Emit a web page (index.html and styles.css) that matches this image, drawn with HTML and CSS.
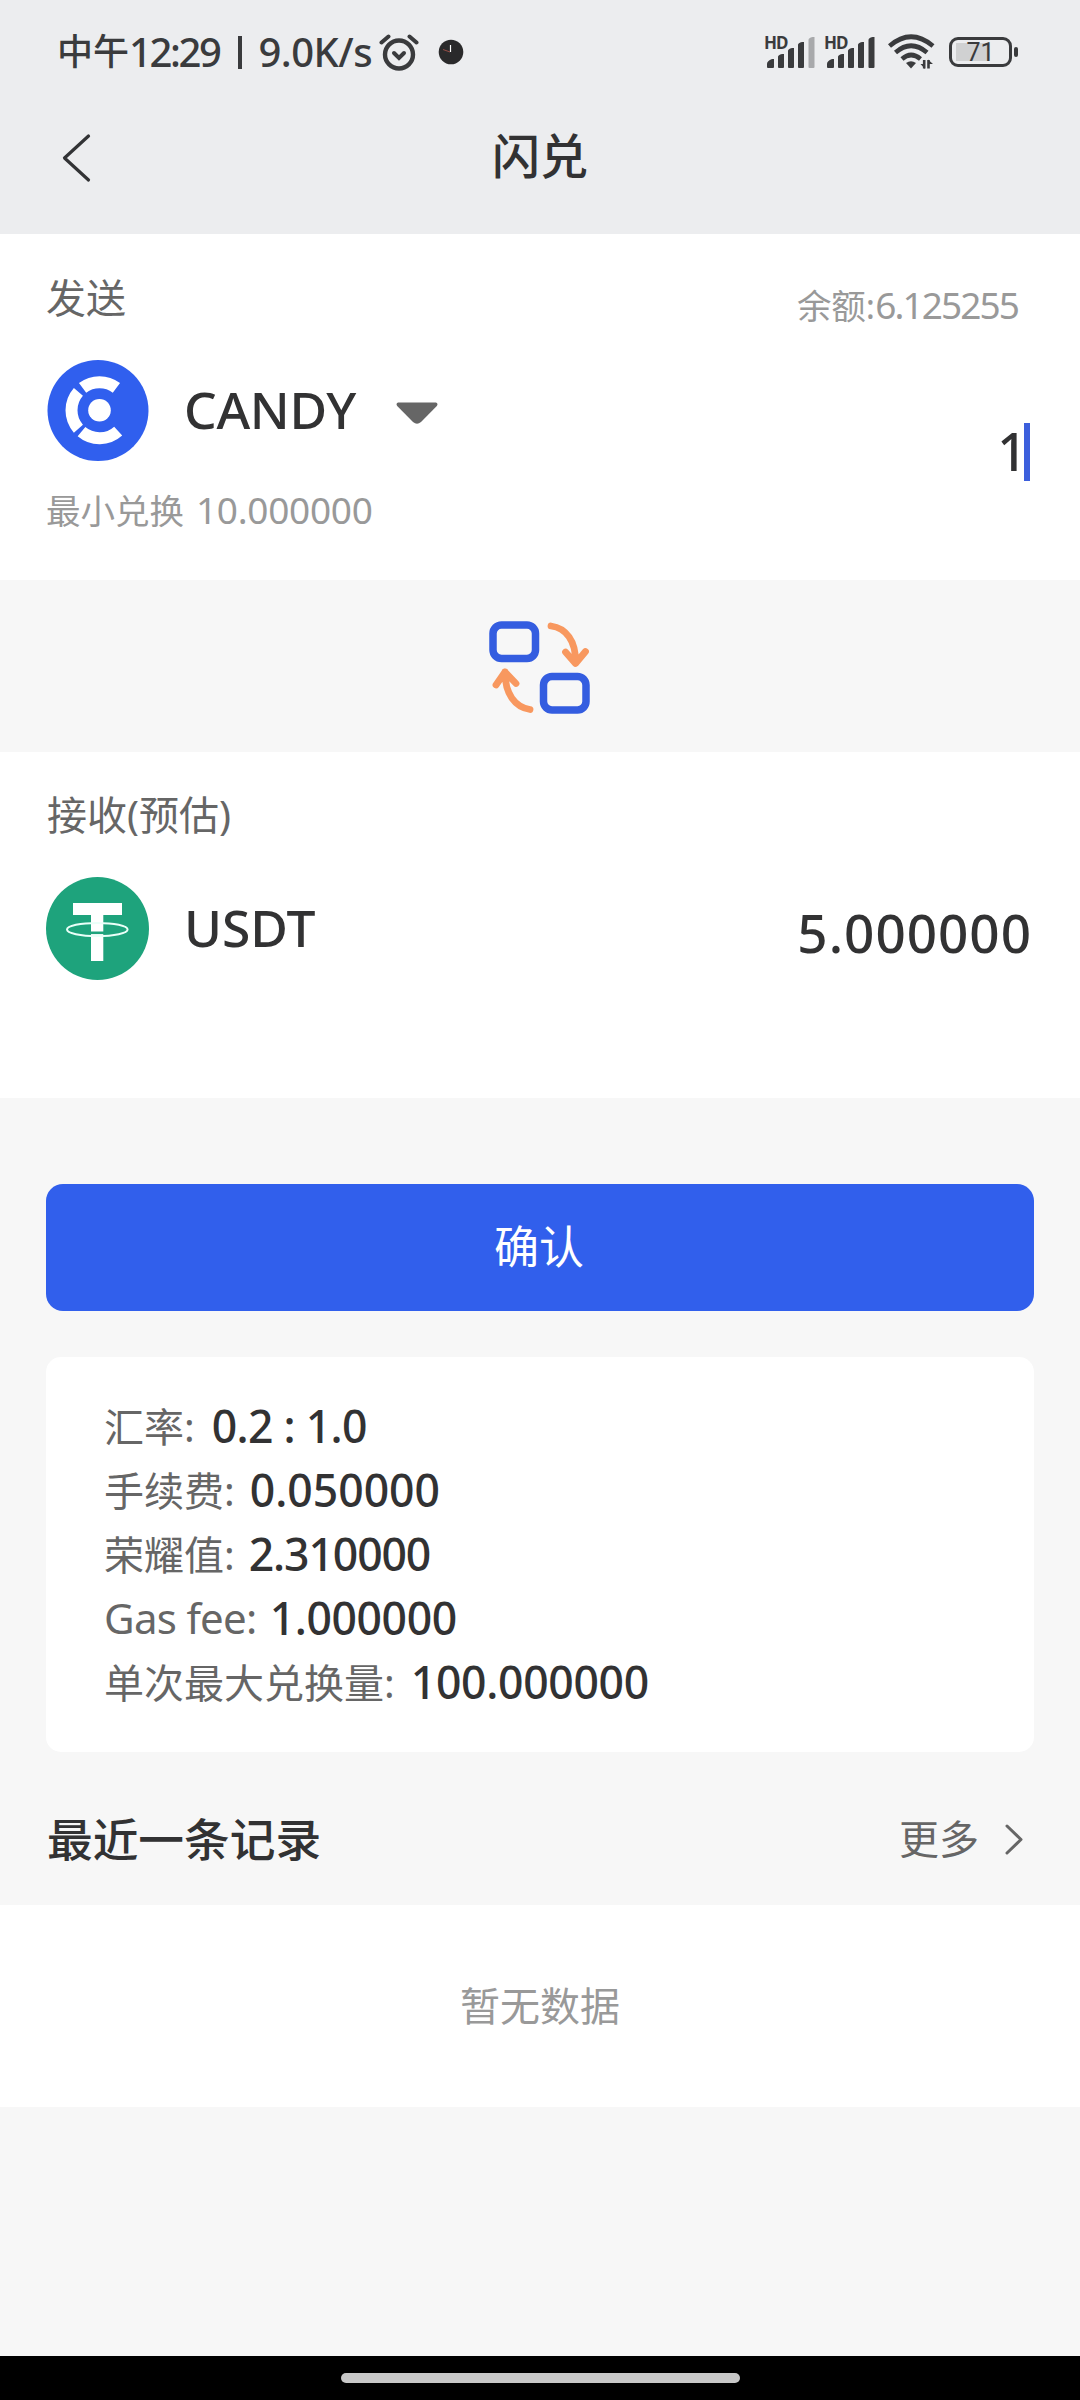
FILE: index.html
```html
<!DOCTYPE html>
<html lang="zh-CN">
<head>
<meta charset="utf-8">
<title>闪兑</title>
<link rel="stylesheet" href="styles.css">
</head>
<body>
<div class="screen">
  <header class="top">
    <div class="status">
      <div class="status-left">
        <span class="status-cn">中午</span><span class="status-time">12:29</span>
        <i class="status-bar"></i>
        <span class="status-speed">9.0K/s</span>
        <svg class="alarm" width="40" height="38" viewBox="0 0 40 38" fill="none" stroke="#3a3b3d" stroke-linecap="round">
          <circle cx="20" cy="21.5" r="14" stroke-width="4.4"/>
          <path d="M15 20l5 5 5-5" stroke-width="4"/>
          <path d="M2.500 9.500L9.500 3.500M37.500 9.500L30.500 3.500" stroke-width="4"/>
        </svg>
        <svg class="dial" width="26" height="26" viewBox="0 0 26 26">
          <circle cx="13" cy="13" r="12.300" fill="#2a2a2b"/>
          <path d="M12.500 13V6" stroke="#fff" stroke-width="1.200"/>
          <path d="M12 13L5 10.500" stroke="#b0554c" stroke-width=".8"/>
        </svg>
      </div>
      <div class="status-right">
        <div class="signal">
          <span class="hd">HD</span>
          <svg width="50" height="34" viewBox="0 0 50 34" fill="#3a3b3d">
            <path d="M2 32v-3q0-3 5-5h2v8q0 1-1 1H3q-1 0-1-1zM13 32V22q0-2 4-3h2v13q0 1-1 1h-4q-1 0-1-1zM23 32V16q0-2 4-3h2v19q0 1-1 1h-4q-1 0-1-1zM33 32V10q0-2 4-3h2v25q0 1-1 1h-4q-1 0-1-1z"/>
            <path d="M43.500 32V5q0-2 4-3h2v30q0 1-1 1h-4q-1 0-1-1z" fill="#a8a9ab"/>
          </svg>
        </div>
        <div class="signal">
          <span class="hd">HD</span>
          <svg width="50" height="34" viewBox="0 0 50 34" fill="#3a3b3d">
            <path d="M2 32v-3q0-3 5-5h2v8q0 1-1 1H3q-1 0-1-1zM13 32V22q0-2 4-3h2v13q0 1-1 1h-4q-1 0-1-1zM23 32V16q0-2 4-3h2v19q0 1-1 1h-4q-1 0-1-1zM33 32V10q0-2 4-3h2v25q0 1-1 1h-4q-1 0-1-1zM43.500 32V5q0-2 4-3h2v30q0 1-1 1h-4q-1 0-1-1z"/>
          </svg>
        </div>
        <svg class="wifi" width="47" height="36" viewBox="0 0 47 36" fill="none" stroke="#3a3b3d" stroke-width="4.600">
          <path d="M1.500 12Q23 -6.500 45 12"/>
          <path d="M7.500 18.500Q23 5 39 18.500"/>
          <path d="M14 25Q23 17 32.500 25"/>
          <path d="M18 29Q23 25.500 28 29L23 34.500z" fill="#3a3b3d" stroke="none"/>
          <path d="M36.200 34.500V26M40.500 26v8.500" stroke-width="2.600"/>
          <path d="M37 35l-4.500-5H37zM40 25.500l5 4.500h-5z" fill="#3a3b3d" stroke="none"/>
        </svg>
        <div class="battery"><span>71</span></div>
      </div>
    </div>
    <nav class="nav">
      <svg class="back" width="30" height="50" viewBox="0 0 30 50" fill="none" stroke="#323335" stroke-width="3.200" stroke-linecap="round" stroke-linejoin="round"><path d="M26.500 3L2.500 25 26.500 47"/></svg>
      <h1>闪兑</h1>
    </nav>
  </header>

  <main>
    <section class="card send">
      <div class="send-left">
        <div class="label">发送</div>
        <div class="token">
          <svg width="103" height="102" viewBox="-1 0 103 102">
            <circle cx="51" cy="50.500" r="50.500" fill="#305fee"/>
            <g transform="translate(52.500 50.300)" fill="none" stroke="#fff" stroke-width="12">
              <circle r="11.300" fill="#fff" stroke="none"/>
              <path d="M-16.900 -22.400A28 28 0 0 1 16.900 -22.400"/>
              <path d="M-21.100 -18.400A28 28 0 0 0 -21.100 18.400"/>
              <path d="M-18 21.400A28 28 0 0 0 18.700 20.800"/>
            </g>
          </svg>
          <span class="token-name candy">CANDY</span>
          <svg class="caret" width="42" height="22" viewBox="0 0 42 22"><path d="M2 .5h38q2.500 1 .8 3.500L25 20q-4 3.500-8 0L1.200 4Q-.5 1.500 2 .5z" fill="#666"/></svg>
        </div>
        <div class="min">最小兑换 <span class="min-num">10.000000</span></div>
      </div>
      <div class="send-right">
        <div class="balance">余额:<span class="balance-num">6.125255</span></div>
        <div class="amount-input"><span>1</span><i class="cursor"></i></div>
      </div>
    </section>

    <div class="swap">
      <svg width="102" height="94" viewBox="0 0 102 94" fill="none">
        <g stroke="#345de0" stroke-width="7.500">
          <rect x="4" y="4" width="42.500" height="33.500" rx="8.500"/>
          <rect x="54.500" y="55.500" width="42.500" height="33.500" rx="8.500"/>
        </g>
        <g stroke="#f8985f" stroke-width="6.800" stroke-linecap="round" stroke-linejoin="round">
          <path d="M62 5C77 7 87 20 86.500 41M76.500 31l10 11.500 10-12"/>
          <path d="M41 88.500C26 86 16 73 16 51M7 64l9-13 11 11.500"/>
        </g>
      </svg>
    </div>

    <section class="card receive">
      <div class="label">接收(预估)</div>
      <div class="token">
        <svg width="103" height="103" viewBox="0 0 103 103">
          <circle cx="51.500" cy="51.500" r="51.500" fill="#1ea37c"/>
          <path d="M27 26h49v12H57.300v46H45V38H27z" fill="#fff"/>
          <path d="M44 55.800h14.500" stroke="#1ea37c" stroke-width="2.600"/>
          <ellipse cx="51.300" cy="52.500" rx="30.300" ry="6.600" fill="none" stroke="#eafff8" stroke-width="2"/>
        </svg>
        <span class="token-name usdt">USDT</span>
        <span class="receive-amount">5.000000</span>
      </div>
    </section>

    <button class="confirm" type="button">确认</button>

    <section class="info">
      <div class="row"><span>汇率:</span><b class="rate">0.2 : 1.0</b></div>
      <div class="row"><span>手续费:</span><b>0.050000</b></div>
      <div class="row"><span>荣耀值:</span><b class="tight">2.310000</b></div>
      <div class="row"><span class="gas">Gas fee:</span><b class="gas-num">1.000000</b></div>
      <div class="row"><span>单次最大兑换量:</span><b class="max-num">100.000000</b></div>
    </section>

    <div class="records-head">
      <h2>最近一条记录</h2>
      <a class="more">更多
        <svg width="20" height="34" viewBox="0 0 20 34" fill="none" stroke="#666" stroke-width="3" stroke-linecap="round" stroke-linejoin="round"><path d="M3 4l14 13.500L3 31"/></svg>
      </a>
    </div>
    <div class="empty">暂无数据</div>
  </main>

  <footer class="gesture"><i></i></footer>
</div>
</body>
</html>
```
FILE: styles.css
```css
* { box-sizing: border-box; }

body {
  margin: 0;
  background: #f7f7f7;
  color: #323233;
  font-family: "Noto Sans", "Noto Sans CJK SC", sans-serif;
}

h1, h2 { margin: 0; }
svg { display: block; flex: none; }

.screen {
  width: 1080px;
  height: 2400px;
  display: flex;
  flex-direction: column;
}

main { flex: 1; }

/* status bar and title */
.top {
  height: 234px;
  background: #ecedef;
}

.status {
  height: 104px;
  display: flex;
  justify-content: space-between;
  align-items: center;
  padding: 0 62px 0 57px;
  line-height: 50px;
  color: #3a3b3d;
}

.status-left, .status-right { display: flex; align-items: center; }
.status-cn { font-size: 36px; font-weight: 500; }
.status-time { font-size: 40px; font-weight: 500; letter-spacing: -2.4px; }
.status-bar { width: 4px; height: 33px; margin: 0 16px 0 19px; background: #3a3b3d; }
.status-speed { font-size: 40px; font-weight: 500; letter-spacing: -.5px; }
.alarm { margin-left: 7px; }
.dial { margin-left: 19px; }

.signal { position: relative; width: 51px; margin-right: 9px; }
.hd {
  position: absolute;
  left: -1px;
  top: 0;
  font-size: 17px;
  font-weight: 700;
  line-height: 16px;
  letter-spacing: -1px;
}
.wifi { margin: 0 14px 0 3px; }

.battery {
  position: relative;
  width: 63px;
  height: 30px;
  border: 3px solid #3a3b3d;
  border-radius: 9px;
  background: linear-gradient(#d0d1d2, #d0d1d2) 4px 3px / 34px 18px no-repeat;
  font-family: Roboto, sans-serif;
  font-size: 25px;
  font-weight: 400;
  line-height: 25px;
  text-align: center;
  margin-right: 6px;
}
.battery::after {
  content: "";
  position: absolute;
  right: -9px;
  top: 7px;
  width: 4px;
  height: 10px;
  border-radius: 2px;
  background: #3a3b3d;
}

.nav {
  height: 104px;
  display: grid;
  grid-template-columns: 1fr auto 1fr;
  align-items: center;
  padding: 0 62px;
}
.nav h1 { font-size: 48px; font-weight: 500; line-height: 60px; }
.back { margin-top: 4px; }

/* token cards */
.card { height: 346px; background: #fff; padding: 43px 50px 0 46px; }
.label { font-size: 40px; line-height: 40px; color: #666; }
.token { display: flex; align-items: center; }
.token-name { margin-left: 35px; padding-bottom: 4px; font-size: 51.500px; font-weight: 500; line-height: 60px; }
.candy { letter-spacing: -.3px; }
.caret { margin-left: 40px; margin-top: 4px; }

.send { display: flex; justify-content: space-between; }
.send .label { margin-top: 1px; }
.send .token { margin-top: 42px; height: 101px; }
.min { margin-top: 29px; font-size: 34.500px; line-height: 40px; color: #999; }
.min-num { font-size: 37px; letter-spacing: -.3px; margin-left: 3px; }

.send-right { padding-top: 8px; display: flex; flex-direction: column; align-items: flex-end; }
.balance { margin-right: 12px; font-size: 34.500px; line-height: 40px; color: #999; }
.balance-num { font-size: 37px; letter-spacing: -1.900px; }
.amount-input {
  margin-top: 97px;
  height: 58px;
  display: flex;
  align-items: center;
  font-size: 52px;
  font-weight: 500;
  line-height: 58px;
}
.amount-input span { margin-right: -3px; padding-bottom: 2px; }
.cursor { width: 6px; height: 58px; background: #3c5fdc; }

.swap {
  height: 172px;
  padding-top: 3px;
  display: flex;
  align-items: center;
  justify-content: center;
}

.receive .label { padding-left: 1px; }
.receive .token { margin-top: 42px; }
.receive-amount {
  margin-left: auto;
  margin-right: -2px;
  padding-top: 8px;
  font-size: 53px;
  font-weight: 500;
  line-height: 60px;
  letter-spacing: 1px;
}

/* confirm button */
.confirm {
  display: block;
  width: 988px;
  height: 127px;
  margin: 86px auto 0;
  padding: 0 2px 2px 0;
  border: 0;
  border-radius: 17px;
  background: #315fec;
  color: #fff;
  font: 400 45px/60px "Noto Sans", "Noto Sans CJK SC", sans-serif;
}

/* exchange details */
.info {
  width: 988px;
  height: 395px;
  margin: 46px auto 0;
  padding: 38px 58px 0;
  border-radius: 15px;
  background: #fff;
}
.row { display: flex; align-items: center; height: 64px; font-size: 40px; line-height: 64px; color: #666; }
.row b { margin-left: 15px; padding-bottom: 3px; font-size: 44.500px; font-weight: 500; color: #323233; }
.row .rate { margin-left: 17px; letter-spacing: -.7px; }
.row .gas { padding-bottom: 2px; font-size: 42px; letter-spacing: -.7px; }
.row .tight { margin-left: 14px; letter-spacing: -1.100px; }
.row .gas-num { margin-left: 13px; letter-spacing: -.4px; }
.row .max-num { margin-left: 16px; letter-spacing: -.3px; }

/* latest record */
.records-head {
  height: 153px;
  padding: 21px 56px 0 47px;
  display: flex;
  align-items: center;
  justify-content: space-between;
}
.records-head h2 { font-size: 45.700px; font-weight: 500; line-height: 60px; }
.more { display: flex; align-items: center; gap: 25px; font-size: 40px; line-height: 50px; color: #666; }
.empty { height: 202px; background: #fff; color: #999; font-size: 40px; line-height: 202px; text-align: center; }

/* system gesture bar */
.gesture { height: 44px; background: #000; display: flex; align-items: center; justify-content: center; }
.gesture i { width: 399px; height: 10px; border-radius: 5px; background: #c8c8c8; }
```
